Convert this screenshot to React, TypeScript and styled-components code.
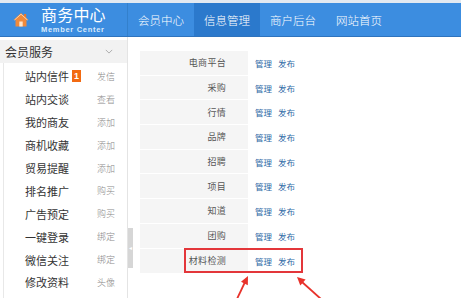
import type { FC } from 'react'
import styled, { createGlobalStyle } from 'styled-components'

const GlobalStyle = createGlobalStyle`
	html, body {
		margin: 0;
		padding: 0;
		background: #fff;
		font-family: "Noto Sans CJK SC", "Liberation Sans", sans-serif;
	}
`

const navItems = ['会员中心', '信息管理', '商户后台', '网站首页']

const menuItems = [
	{ name: '站内信件', action: '发信', badge: '1' },
	{ name: '站内交谈', action: '查看' },
	{ name: '我的商友', action: '添加' },
	{ name: '商机收藏', action: '添加' },
	{ name: '贸易提醒', action: '添加' },
	{ name: '排名推广', action: '购买' },
	{ name: '广告预定', action: '购买' },
	{ name: '一键登录', action: '绑定' },
	{ name: '微信关注', action: '绑定' },
	{ name: '修改资料', action: '头像' },
]

const rows = ['电商平台', '采购', '行情', '品牌', '招聘', '项目', '知道', '团购', '材料检测']

const HouseIcon: FC = () => (
	<svg width="16" height="15" viewBox="0 0 16 15">
		<rect x="11" y="2" width="2.2" height="4" fill="#e9772a" />
		<path d="M8 1 L15.5 8 L13.5 8 L13.5 14.5 L2.5 14.5 L2.5 8 L0.5 8 Z" fill="#f08a3c" />
		<path d="M1.5 8 L8 2.2 L14.5 8" stroke="#fcd2a6" strokeWidth="1" fill="none" />
		<rect x="6.3" y="9.5" width="3.4" height="5" fill="#fde6cc" />
	</svg>
)

// red annotation drawn over the content, coordinates relative to Main
const Annotations: FC = () => (
	<Overlay width="333" height="261" viewBox="0 0 333 261">
		<rect x="57" y="212" width="117" height="23" fill="none" stroke="#e3363a" strokeWidth="2" />
		<line x1="109" y1="262" x2="117.5" y2="244" stroke="#e8322b" strokeWidth="1.8" />
		<path d="M120 239 L119.8 248.2 L113 244.8 Z" fill="#e8322b" />
		<line x1="193" y1="262" x2="174" y2="245" stroke="#e8322b" strokeWidth="1.8" />
		<path d="M169 240 L177.6 242.5 L172.3 248.4 Z" fill="#e8322b" />
	</Overlay>
)

export default function App() {
	return (
		<Page>
			<GlobalStyle />
			<TopStrip />
			<Header>
				<Logo>
					<HouseIcon />
					<LogoText>
						<LogoTitle>商务中心</LogoTitle>
						<LogoSub>Member Center</LogoSub>
					</LogoText>
				</Logo>
				<Nav>
					{navItems.map(item => (
						<NavItem key={item} $active={item === '信息管理'}>
							{item}
						</NavItem>
					))}
				</Nav>
			</Header>
			<Body>
				<Sidebar>
					<SideHead>
						<span>会员服务</span>
						<svg viewBox="0 0 10 6" width="8" height="5">
							<path d="M1 1 L5 5 L9 1" stroke="#aaa" strokeWidth="1.2" fill="none" />
						</svg>
					</SideHead>
					<Menu>
						{menuItems.map(item => (
							<MenuRow key={item.name}>
								<MenuName>
									{item.name}
									{item.badge && <Badge>{item.badge}</Badge>}
								</MenuName>
								<MenuAction>{item.action}</MenuAction>
							</MenuRow>
						))}
					</Menu>
					<Toggle>◂</Toggle>
				</Sidebar>
				<Main>
					<Table>
						<tbody>
							{rows.map(row => (
								<Tr key={row}>
									<Label>{row}</Label>
									<Links>
										<a>管理</a>
										<a>发布</a>
									</Links>
								</Tr>
							))}
						</tbody>
					</Table>
					<Annotations />
				</Main>
			</Body>
		</Page>
	)
}

const Page = styled.div`
	width: 461px;
	height: 298px;
	overflow: hidden;
`

const TopStrip = styled.div`
	height: 3px;
	background: #e2e9f1;
`

const Header = styled.div`
	display: flex;
	height: 33px;
	background: #3c8de0;
	border-bottom: 1px solid #2e73bd;
`

const Logo = styled.div`
	display: flex;
	align-items: center;
	gap: 12px;
	width: 128px;
	padding-left: 13px;
	box-sizing: border-box;
	border-right: 1px solid #3380cc;
`

const LogoText = styled.div`
	display: flex;
	flex-direction: column;
	gap: 4px;
	color: #fff;
`

const LogoTitle = styled.div`
	font-size: 16px;
	line-height: 16px;
	height: 16px;
	letter-spacing: 0.2px;
`

const LogoSub = styled.div`
	font-family: "Liberation Sans", sans-serif;
	font-size: 7.5px;
	line-height: 8px;
	letter-spacing: 0.7px;
	color: #d9eafc;
	font-weight: bold;
`

const Nav = styled.div`
	display: flex;
`

const NavItem = styled.div<{ $active?: boolean }>`
	display: flex;
	align-items: center;
	justify-content: center;
	width: 66px;
	font-size: 11.5px;
	font-weight: 300;
	color: #fff;
	background: ${({ $active }) => ($active ? '#2b79cc' : 'transparent')};
`

const Body = styled.div`
	display: flex;
`

const Sidebar = styled.div`
	position: relative;
	flex: 0 0 128px;
	height: 261px;
	border-right: 1px solid #e4e4e4;
	box-sizing: border-box;
`

const SideHead = styled.div`
	display: flex;
	align-items: center;
	justify-content: space-between;
	height: 23px;
	margin-top: 3px;
	padding: 0 14px 0 5px;
	background: #f2f2f2;
	font-size: 12px;
	color: #333;
`

const Menu = styled.div`
	margin-left: 3px;
	border-left: 1px solid #e8e8e8;
	padding-top: 2px;
	height: 240px;
`

const MenuRow = styled.div`
	display: flex;
	align-items: center;
	justify-content: space-between;
	height: 22.9px;
	padding: 0 12px 0 21px;
	font-size: 11px;
	color: #333;
`

const MenuName = styled.span`
	display: flex;
	align-items: center;
`

const Badge = styled.span`
	display: inline-flex;
	align-items: center;
	justify-content: center;
	width: 9px;
	height: 12px;
	margin-left: 3px;
	background: #f26a12;
	color: #fff;
	font-size: 9px;
	font-weight: bold;
	font-family: "Liberation Sans", sans-serif;
`

const MenuAction = styled.span`
	font-size: 9px;
	font-weight: 300;
	color: #888;
`

const Toggle = styled.div`
	position: absolute;
	right: -6px;
	top: 191px;
	width: 5px;
	height: 40px;
	background: #d6d6d6;
	color: #fff;
	font-size: 6px;
	line-height: 40px;
	text-align: center;
`

const Main = styled.div`
	position: relative;
	flex: 1;
	padding: 13px 0 0 12px;
`

const Overlay = styled.svg`
	position: absolute;
	left: 0;
	top: 0;
	pointer-events: none;
`

const Table = styled.table`
	border-collapse: collapse;
	font-size: 9px;
`

const Tr = styled.tr`
	height: 24.7px;
	border-top: 1px solid #fff;
`

const Label = styled.td`
	width: 108px;
	padding: 0 22px 0 0;
	background: #f5f5f5;
	color: #555;
	text-align: right;
	letter-spacing: 0.3px;
	box-sizing: border-box;
`

const Links = styled.td`
	padding-left: 7px;
	font-size: 8.5px;
	a {
		color: #2f6aa6;
		margin-right: 6px;
	}
`
